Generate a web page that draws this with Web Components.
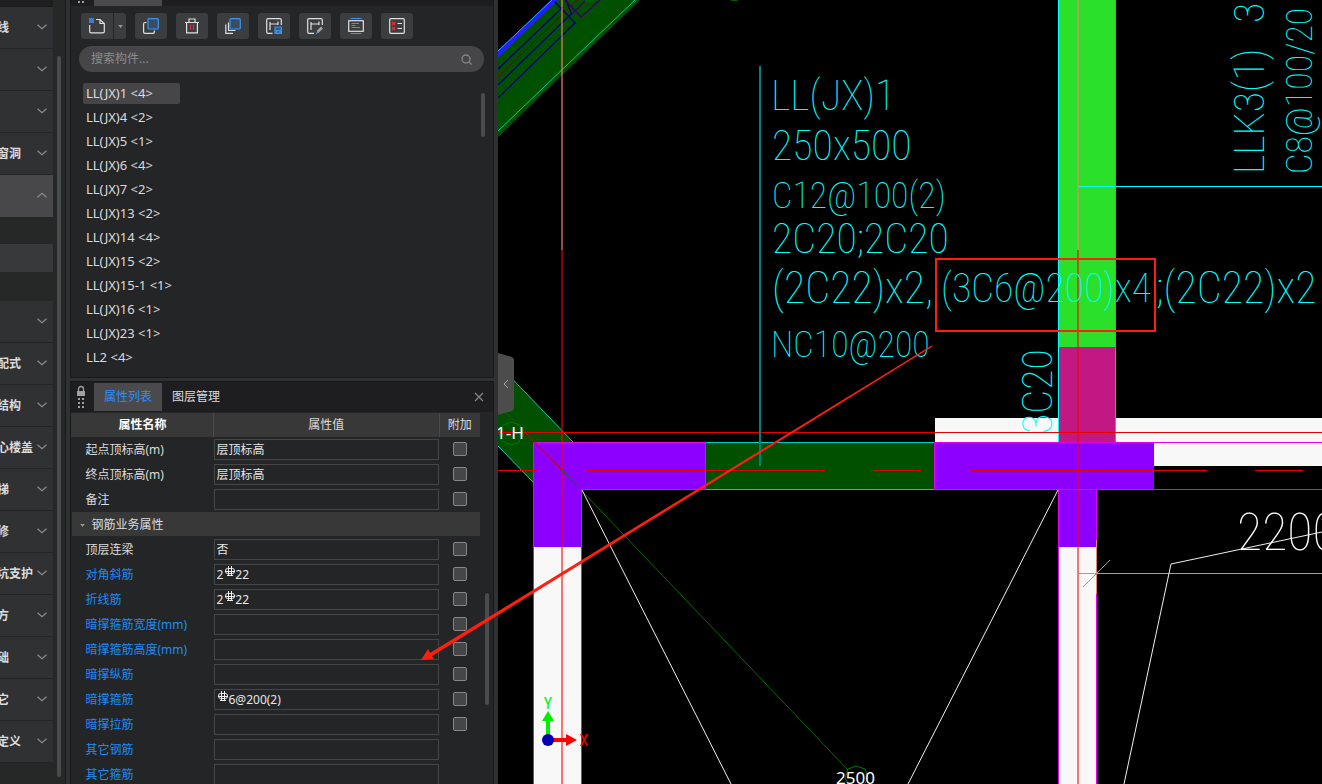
<!DOCTYPE html>
<html lang="zh-CN">
<head>
<meta charset="utf-8">
<title>属性列表</title>
<style>
    html, body {
        margin: 0;
        height: 100%;
        overflow: hidden;
        background: #000;
    }
    body {
        font: 12px/16px "Noto Sans", "Noto Sans CJK SC", sans-serif;
        color: #dcdcdc;
    }
</style>
</head>
<body>
<app-shell></app-shell>

<script>
// Base class: clones the template into an open shadow root
class BaseElement extends HTMLElement {
    constructor() {
        super();
        const template = document.createElement('template');
        template.innerHTML = this.constructor.markup;
        this.attachShadow({ mode: 'open' });
        this.shadowRoot.appendChild(template.content.cloneNode(true));
    }
}

// Scroll thumb, sized with --top and --size
class ScrollThumb extends BaseElement {
    static get markup() {
        return `
        <style>
            :host { display: block; width: 4px; flex: none; }
            div {
                margin-top: var(--top, 0);
                height: var(--size, 40px);
                border-radius: 2px;
                background: #4a4b4d;
            }
        </style>
        <div></div>`;
    }
}
customElements.define('scroll-thumb', ScrollThumb);

// One group of the navigation
class NavItem extends BaseElement {
    static get markup() {
        return `
        <style>
            :host { display: block; }
            button {
                display: flex;
                align-items: center;
                width: 100%;
                height: 42px;
                padding: 0 6px 0 0;
                border: 0;
                border-bottom: 1px solid #232425;
                background: #303132;
                color: #dcdcdc;
                font: inherit;
                font-weight: 600;
                text-align: left;
                white-space: nowrap;
            }
            span { flex: 1; margin-left: -3px; }
            svg { flex: none; width: 10px; height: 6px; padding-bottom: 2px; }
            :host([open]) button { background: #48484a; border-bottom-color: #48484a; }
            :host([open]) path { transform: rotate(180deg); transform-origin: 5px 3px; }
        </style>
        <button type="button">
            <span><slot></slot></span>
            <svg viewBox="0 0 10 6" fill="none" stroke="#8c8c8c" stroke-width="1.2"><path d="M0.5 0.7L5 4.7L9.5 0.7"/></svg>
        </button>`;
    }

    connectedCallback() {
        const open = this.hasAttribute('open');
        const button = this.shadowRoot.querySelector('button');
        button.setAttribute('aria-expanded', open);
        if (!this.textContent) {
            button.setAttribute('aria-label', 'group');
        }
    }
}
customElements.define('nav-item', NavItem);

class SideNav extends BaseElement {
    static get markup() {
        return `
        <style>
            :host {
                display: flex;
                gap: 4px;
                flex: none;
                width: 65px;
                background: #262827;
                border-right: 1px solid #19191a;
            }
            nav { width: 53px; overflow: hidden; }
            header { height: 6px; background: #1e1e20; border-bottom: 1px solid #19191a; }
            .sub { padding: 27px 0 29px; background: #262827; }
            .sub div { height: 28px; background: #38393a; }
            scroll-thumb { --top: 56px; --size: 721px; }
        </style>
        <nav>
            <header></header>
            <nav-item>线</nav-item>
            <nav-item></nav-item>
            <nav-item></nav-item>
            <nav-item>窗洞</nav-item>
            <nav-item open></nav-item>
            <div class="sub"><div></div></div>
            <nav-item></nav-item>
            <nav-item>配式</nav-item>
            <nav-item>结构</nav-item>
            <nav-item>心楼盖</nav-item>
            <nav-item>梯</nav-item>
            <nav-item>修</nav-item>
            <nav-item>坑支护</nav-item>
            <nav-item>方</nav-item>
            <nav-item>础</nav-item>
            <nav-item>它</nav-item>
            <nav-item>定义</nav-item>
        </nav>
        <scroll-thumb></scroll-thumb>`;
    }
}
customElements.define('side-nav', SideNav);

class ToolButton extends BaseElement {
    static get markup() {
        return `
        <style>
            :host { display: block; }
            button {
                display: grid;
                place-items: center;
                width: var(--width, 32px);
                height: 26px;
                padding: 0;
                border: 0;
                border-radius: var(--radius, 3px);
                background: #3c3d3f;
            }
        </style>
        <button type="button"><slot></slot></button>`;
    }

    connectedCallback() {
        this.shadowRoot.querySelector('button').setAttribute('aria-label', this.getAttribute('label'));
    }
}
customElements.define('tool-button', ToolButton);

class ToolBar extends BaseElement {
    static get markup() {
        return `
        <style>
            :host { display: flex; gap: 9px; padding: 7px 10px; }
            .split { display: flex; gap: 1px; }
            .split tool-button:first-child { --radius: 3px 0 0 3px; }
            .split tool-button:last-child { --width: 12px; --radius: 0 3px 3px 0; }
            svg { display: block; width: 16px; height: 16px; fill: none; stroke: #e0e0e0; stroke-width: 1.2; }
            .arrow { width: 5px; height: 3px; fill: #9a9a9a; stroke: none; }
            .blue { stroke: #3a96f0; }
            .red { stroke: #e02d33; }
        </style>
        <div class="split">
            <tool-button label="新建"><svg viewBox="0 0 16 16">
                <path d="M7 1.5H11L15.3 5.5V13.5Q15.3 14.8 14 14.8H2Q0.7 14.8 0.7 13.5V7M11 1.5V5.5H15"/>
                <path d="M0 0H5V5H0Z" fill="#2d6cb0" stroke="none"/>
                <path class="blue" stroke-dasharray="1 1" d="M0 0.5H5M1 1.5H5M0 2.5H5M1 3.5H5M0 4.5H5"/>
            </svg></tool-button>
            <tool-button label="新建类型"><svg class="arrow" viewBox="0 0 6 4"><path d="M0 0H6L3 4Z"/></svg></tool-button>
        </div>
        <tool-button label="复制"><svg viewBox="0 0 16 16">
            <path d="M3.5 4.5H2Q0.6 4.5 0.6 6V14Q0.6 15.4 2 15.4H10Q11.4 15.4 11.4 14V12.5"/>
            <rect class="blue" x="5" y="0.7" width="10.3" height="10.3" rx="1" fill="#3b4c61"/>
        </svg></tool-button>
        <tool-button label="删除"><svg viewBox="0 0 16 16">
            <path d="M1 4.5H15M5 4.5V1H11V4.5M2.6 4.5V14.9H13.4V4.5"/>
            <path class="red" d="M6.5 6.5V12M9.5 6.5V12"/>
        </svg></tool-button>
        <tool-button label="层间复制"><svg viewBox="0 0 16 16">
            <path d="M3.5 4.5V12.5H10.5M0.8 6.5V15.3H8"/>
            <rect class="blue" x="5" y="0.7" width="10.3" height="10.3" rx="1" fill="#3b4c61"/>
        </svg></tool-button>
        <tool-button label="存盘"><svg viewBox="0 0 16 16">
            <path d="M6.5 15.3H2Q0.7 15.3 0.7 14V2Q0.7 0.7 2 0.7H14Q15.3 0.7 15.3 2V7M4 4V12M4 6H12M12 3.5V7"/>
            <path class="blue" d="M9 9H15.4V15.4H9ZM10.5 15V12.5H14V15" fill="#2d5d8e"/>
        </svg></tool-button>
        <tool-button label="提取"><svg viewBox="0 0 16 16">
            <path d="M7 15.3H2Q0.7 15.3 0.7 14V2Q0.7 0.7 2 0.7H14Q15.3 0.7 15.3 2V7M4 4V12M4 6H12M12 3.5V7"/>
            <path d="M10.5 14L15 9.5" stroke="#a4a4a4" stroke-width="2.6"/>
            <path class="blue" d="M9 15.8L11 13.6"/>
        </svg></tool-button>
        <tool-button label="图元"><svg viewBox="0 0 16 16">
            <rect x="0.7" y="2.7" width="14.6" height="10.6"/>
            <path class="blue" d="M2.5 0.5H13.5M2.5 15.5H13.5M3.5 5.5H11M3.5 7.5H7.5M3.5 9.5H12"/>
        </svg></tool-button>
        <tool-button label="列表"><svg viewBox="0 0 16 16">
            <rect x="0.7" y="0.7" width="14.6" height="14.6" rx="1"/>
            <path d="M8.5 5.5H13M8.5 10.5H13"/>
            <path class="red" d="M3 4L6 7M6 4L3 7M3 9L6 12M6 9L3 12" stroke-width="1.6"/>
        </svg></tool-button>`;
    }
}
customElements.define('tool-bar', ToolBar);

class SearchBox extends BaseElement {
    static get markup() {
        return `
        <style>
            :host { display: block; padding: 0 9px 0 8px; }
            label {
                display: flex;
                align-items: center;
                height: 26px;
                padding: 0 12px;
                border-radius: 13px;
                background: #464648;
            }
            input {
                flex: 1;
                min-width: 0;
                padding: 0;
                border: 0;
                outline: 0;
                background: none;
                color: #dcdcdc;
                font: inherit;
            }
            input::placeholder { color: #8c8c8e; }
            svg { width: 11px; height: 11px; fill: none; stroke: #838385; stroke-width: 1.4; }
        </style>
        <label>
            <input type="text" placeholder="搜索构件..." aria-label="搜索构件">
            <svg viewBox="0 0 11 11"><circle cx="5" cy="5" r="4"/><path d="M8 8L10.5 10.5"/></svg>
        </label>`;
    }
}
customElements.define('search-box', SearchBox);

const COMPONENTS = [
    'LL(JX)1 <4>', 'LL(JX)4 <2>', 'LL(JX)5 <1>', 'LL(JX)6 <4>', 'LL(JX)7 <2>', 'LL(JX)13 <2>',
    'LL(JX)14 <4>', 'LL(JX)15 <2>', 'LL(JX)15-1 <1>', 'LL(JX)16 <1>', 'LL(JX)23 <1>', 'LL2 <4>',
];

class ComponentList extends BaseElement {
    static get markup() {
        return `
        <style>
            :host { display: flex; padding: 9px 8px 0 12px; }
            ul { flex: 1; margin: 0; padding: 0; list-style: none; font-size: 13px; line-height: 20px; }
            li { box-sizing: border-box; width: 97px; height: 24px; padding: 2px 0; }
            span { display: block; height: 21px; padding-left: 3px; border-radius: 2px; white-space: nowrap; }
            .selected span { background: #464648; }
            scroll-thumb { --top: 12px; --size: 44px; }
        </style>
        <ul></ul>
        <scroll-thumb></scroll-thumb>`;
    }

    connectedCallback() {
        const list = this.shadowRoot.querySelector('ul');
        COMPONENTS.forEach((name, i) => {
            const item = document.createElement('li');
            const text = document.createElement('span');
            text.textContent = name;
            item.appendChild(text);
            item.classList.toggle('selected', i === 0);
            list.appendChild(item);
        });
    }
}
customElements.define('component-list', ComponentList);

// The full-width space in a value leaves room for the rebar sign
const PROPERTIES = [
    { name: '起点顶标高(m)', value: '层顶标高', check: true },
    { name: '终点顶标高(m)', value: '层顶标高', check: true },
    { name: '备注', value: '', check: true },
    { group: '钢筋业务属性' },
    { name: '顶层连梁', value: '否', check: true },
    { name: '对角斜筋', value: '2\u300022', rebar: 'second', check: true, key: true },
    { name: '折线筋', value: '2\u300022', rebar: 'second', check: true, key: true },
    { name: '暗撑箍筋宽度(mm)', value: '', check: true, key: true },
    { name: '暗撑箍筋高度(mm)', value: '', check: true, key: true },
    { name: '暗撑纵筋', value: '', check: true, key: true },
    { name: '暗撑箍筋', value: '\u30006@200(2)', rebar: 'first', check: true, key: true },
    { name: '暗撑拉筋', value: '', check: true, key: true },
    { name: '其它钢筋', value: '', key: true },
    { name: '其它箍筋', value: '', key: true },
];

class PropertyTable extends BaseElement {
    static get markup() {
        return `
        <style>
            :host { display: flex; flex: 1; min-height: 0; overflow: hidden; gap: 5px; }
            .grid { flex: 1; }
            table { width: 100%; table-layout: fixed; border-collapse: collapse; }
            .name { width: 142px; }
            .extra { width: 41px; }
            thead th {
                height: 24px;
                padding: 0;
                border-left: 1px solid #4a4a4a;
                background: #383838;
                font-weight: 400;
            }
            thead th:first-child { font-weight: 700; color: #fff; border-left-color: #383838; }
            td { height: 25px; padding: 0; }
            td:first-child { padding-left: 14px; white-space: nowrap; }
            .key label { color: #1e8cf5; }
            .group td { background: linear-gradient(#383838, #383838) 0 0 / 100% 24px no-repeat; }
            .group td:first-child { padding-left: 8px; }
            .group svg { width: 5px; height: 3px; margin-right: 7px; vertical-align: middle; }
            .value { position: relative; }
            input[type=text] {
                display: block;
                box-sizing: border-box;
                width: 100%;
                height: 21px;
                padding: 0 2px 2px;
                border: 1px solid #464646;
                border-radius: 0;
                outline: 0;
                background: #242527;
                color: #e6e6e6;
                font: inherit;
            }
            .value svg { position: absolute; top: 4px; width: 12px; height: 12px; }
            .second { left: 10px; }
            .first { left: 3px; }
            input[type=checkbox] {
                appearance: none;
                display: block;
                box-sizing: border-box;
                width: 14px;
                height: 14px;
                margin: 0 auto 1px;
                border: 1px solid #868688;
                border-radius: 2px;
                background: #464648;
            }
            scroll-thumb { --top: 180px; --size: 112px; }
        </style>
        <div class="grid">
            <table>
                <colgroup><col class="name"><col><col class="extra"></colgroup>
                <thead><tr><th>属性名称</th><th>属性值</th><th>附加</th></tr></thead>
                <tbody></tbody>
            </table>
        </div>
        <scroll-thumb></scroll-thumb>`;
    }

    connectedCallback() {
        this.shadowRoot.querySelector('tbody').innerHTML = PROPERTIES.map(this._row, this).join('');
    }

    _row(prop, i) {
        if (prop.group) {
            return `<tr class="group"><td colspan="3"><svg viewBox="0 0 6 4"><path d="M0 0H6L3 4Z" fill="#9a9a9a"/></svg>${prop.group}</td></tr>`;
        }
        return `
        <tr class="${prop.key ? 'key' : ''}">
            <td><label for="prop${i}">${prop.name}</label></td>
            <td class="value">
                <input type="text" id="prop${i}" value="${prop.value}">
                ${prop.rebar ? this._rebar(prop.rebar) : ''}
            </td>
            <td>${prop.check ? `<input type="checkbox" aria-label="${prop.name} 附加">` : ''}</td>
        </tr>`;
    }

    _rebar(place) {
        return `<svg class="${place}" viewBox="0 0 12 12" fill="none" stroke="#f0f0f0"><path d="M3.5 2.5H8.5Q10.5 2.5 10.5 5T8.5 7.5H3.5Q1.5 7.5 1.5 5T3.5 2.5M4.5 0V9.5M7.5 0V9.5M1 5.5H11M3 9.5H9"/></svg>`;
    }
}
customElements.define('property-table', PropertyTable);

class TabStrip extends BaseElement {
    static get markup() {
        return `
        <style>
            :host {
                display: flex;
                height: 28px;
                padding: 1px 8px 1px 5px;
                background: #1e1e20;
            }
            .grip { width: 18px; height: 28px; flex: none; }
            button {
                width: 68px;
                padding: 0;
                border: 0;
                background: none;
                color: #dcdcdc;
                font: inherit;
            }
            .active { background: #4a4a4c; color: #2d8cff; }
            .close { width: 12px; margin-left: auto; }
            .close svg { display: block; width: 10px; height: 10px; margin: auto; }
        </style>
        <svg class="grip" viewBox="0 0 18 28" fill="#a0a0a0">
            <path d="M2.5 8V6a2.5 2.5 0 0 1 5 0V8" fill="none" stroke="#a0a0a0" stroke-width="1.3"/>
            <path d="M1 8H9V13H1ZM2 15h2v2H2zM6 15h2v2H6zM2 19h2v2H2zM6 19h2v2H6zM2 23h2v2H2zM6 23h2v2H6z"/>
        </svg>
        <button type="button" class="active">属性列表</button>
        <button type="button">图层管理</button>
        <button type="button" class="close" aria-label="关闭">
            <svg viewBox="0 0 10 10" stroke="#858585" stroke-width="1.2"><path d="M1 1L9 9M9 1L1 9"/></svg>
        </button>`;
    }
}
customElements.define('tab-strip', TabStrip);

class SidePanels extends BaseElement {
    static get markup() {
        return `
        <style>
            :host {
                box-sizing: border-box;
                display: flex;
                flex-direction: column;
                gap: 3px;
                flex: none;
                width: 432px;
                padding: 0 4px;
                background: #303132;
            }
            section {
                display: flex;
                flex-direction: column;
                border: 1px solid #19191a;
                background: #242527;
                overflow: hidden;
            }
            .list { box-sizing: border-box; flex: none; height: 378px; border-top: 0; }
            .props { flex: 1; min-height: 0; border-bottom: 0; }
            .strip { display: flex; flex: none; height: 6px; padding-left: 5px; background: #1e1e20; }
            .strip svg { width: 18px; height: 6px; }
            .strip div { width: 68px; background: #4a4a4c; }
            property-table { padding: 1px 4px 0 0; }
        </style>
        <section class="list">
            <div class="strip">
                <svg viewBox="0 0 18 6" fill="#a0a0a0"><path d="M2 1h2v2H2zM6 1h2v2H6z"/></svg>
                <div></div>
            </div>
            <tool-bar></tool-bar>
            <search-box></search-box>
            <component-list></component-list>
        </section>
        <section class="props">
            <tab-strip></tab-strip>
            <property-table></property-table>
        </section>`;
    }
}
customElements.define('side-panels', SidePanels);

// The drawing: beams, walls, axes and CAD notes
class CadView extends BaseElement {
    static get markup() {
        return `
        <style>
            :host { display: block; flex: 1; min-width: 0; background: #000; overflow: hidden; }
            svg { display: block; width: 100%; height: 100%; }
            .crisp { shape-rendering: crispEdges; }
            .cad { font: 100 42px "Roboto Condensed", Roboto, sans-serif; fill: #0ff; }
            .small { font-size: 36px; }
            .medium { font-size: 40px; }
            .large { font-size: 44px; }
            .dimension { font-size: 52px; fill: #fff; }
            .label { font: 17px "Noto Sans", sans-serif; fill: #fff; }
            .axis { font: 16px "Roboto Condensed", Roboto, sans-serif; text-anchor: middle; }
        </style>
        <svg viewBox="498 0 824 784" preserveAspectRatio="xMinYMin slice" fill="none">
            <path fill="#005000" d="M498 51L551 0H640L498 137Z"/>
            <path fill="#1e1eff" d="M498 51L551 0H558L498 58Z"/>
            <path stroke="#28aaff" d="M498 51L552 0"/>
            <path stroke="#00c8a0" d="M498 131L635 0"/>
            <path stroke="#000078" stroke-width="1.5" d="M498 69L563 7M498 85L571 14M498 98L575 23L555 2M566 0L572 15"/>
            <path stroke="#501400" d="M498 77L577 0"/>
            <path stroke="#3c0064" stroke-width="1.5" d="M565 0L581 17L600 0M573 13L586 0"/>
            <path fill="#005a00" d="M731 0h7v1h-7zM585 0h8v2h-8z"/>

            <path fill="#005000" d="M498 364L573 442H534V484L498 446Z"/>
            <path stroke="#00c8be" d="M498 364L573 442M498 446L534 483"/>
            <g class="crisp">
                <path fill="#f8f8f8" d="M935 418H1322V466H935ZM534 547H582V784H534ZM1059 547H1097V784H1059Z"/>
                <path fill="#2be02b" d="M1059 0H1116V347H1059Z"/>
                <path fill="#c21884" d="M1059 347H1116V442H1059Z"/>
                <path stroke="#00ffff" d="M1058.5 0V442M1078 186.5H1322"/>
                <path stroke="#28b4b4" d="M1115.5 0V442"/>
                <path fill="#005000" d="M705 442H935V490H705Z"/>
                <path stroke="#00c8c8" d="M573 442.5H1059M705 489.5H935"/>
                <path fill="#8c00ff" d="M534 442H705V490H582V547H534ZM935 442H1154V490H1097V547H1059V490H935Z"/>
                <path stroke="#e600f0" d="M533.5 784V442.5H705.5V489.5H581.5V784M934.5 490V442.5H1322M934 489.5H1322M1058.5 490V784M1096.5 490V784"/>
                <path stroke="#e60000" d="M498 432.5H1322"/>
                <path stroke="#e60000" d="M498 470.5H538M586 470.5H825M873 470.5H921M969 470.5H1207M1255 470.5H1303"/>
                <path stroke="#ff0000" stroke-opacity=".55" stroke-width="2" d="M562 250V784M1078 250V784"/>
                <path stroke="#f08468" stroke-opacity=".6" stroke-width="2" d="M562 0V250M1078 0V250"/>
                <path stroke="#008080" stroke-width="2" d="M760 66V466"/>
                <path stroke="#e08868" d="M1077 573.5H1322M1096.5 540V594"/>
            </g>
            <path stroke="#e08868" d="M1083 587L1110 560"/>
            <path stroke="#c80000" d="M506 413L562 470"/>
            <path stroke="#006e00" d="M562 470L848 770"/>
            <path stroke="#f0f0f0" d="M582 490L731 784M1058 490L908 784M1322 532L1171 564L1124 784"/>
            <path stroke="#007800" d="M511 422L520 425L523 434L519 442L511 445L502 441L499 433L503 425ZM845 778L848 769L856 766L865 769L868 778L863 787H850Z"/>

            <g class="cad">
                <text x="771" y="110">LL(JX)1</text>
                <text x="772" y="160">250x500</text>
                <text class="small" x="772" y="208">C12@100(2)</text>
                <text x="772" y="253">2C20;2C20</text>
                <text class="large" x="772" y="303">(2C22)x2,</text>
                <text class="medium" x="941" y="302">(3C6@200)x4</text>
                <text class="large" x="1156" y="303">;(2C22)x2</text>
                <text class="small" x="771" y="357">NC10@200</text>
                <text transform="translate(1052 434) rotate(-90)">3C20</text>
                <text transform="translate(1264 174) rotate(-90)">LLK3(1)</text>
                <text transform="translate(1264 23) rotate(-90)">3</text>
                <text class="small" transform="translate(1312 174) rotate(-90)">C8@100/20</text>
                <text class="dimension" x="1237" y="550">2200</text>
            </g>
            <text class="label" x="496" y="439">1-H</text>
            <text class="label" x="836" y="784">2500</text>

            <path fill="#00f000" d="M546 738V721H542L548 711L554 721H550V738Z"/>
            <path fill="#ff0000" d="M552 738H566V734L577 740L566 746V742H552Z"/>
            <circle cx="548" cy="740" r="6" fill="#0000b4"/>
            <text class="axis" x="548" y="709" fill="#00f000">Y</text>
            <text class="axis" x="584" y="746" fill="#ff0000">X</text>
        </svg>`;
    }
}
customElements.define('cad-view', CadView);

class AppShell extends BaseElement {
    static get markup() {
        return `
        <style>
            :host { position: relative; display: flex; height: 100vh; overflow: hidden; }
            .handle, .notes { position: absolute; }
            .handle {
                left: 498px;
                top: 353px;
                width: 16px;
                height: 62px;
                padding: 0;
                border: 0;
                background: #4c4c4c;
                clip-path: polygon(0 0, 14px 4px, 16px 6px, 16px 56px, 14px 58px, 0 62px);
            }
            .handle svg { display: block; margin: auto; }
            .notes { inset: 0; width: 100%; height: 100%; pointer-events: none; }
        </style>
        <side-nav></side-nav>
        <side-panels></side-panels>
        <cad-view></cad-view>
        <button class="handle" type="button" aria-label="收起">
            <svg width="6" height="10" viewBox="0 0 6 10" fill="none" stroke="#a0a0a0"><path d="M5 1L1 5L5 9"/></svg>
        </button>
        <svg class="notes" viewBox="0 0 1322 784" preserveAspectRatio="xMinYMin slice">
            <rect x="936" y="259" width="219" height="72" fill="none" stroke="#ff1e0f" stroke-width="2"/>
            <path d="M421 660L428 649L430 653L931.5 345.5L932.5 346.5L432 656L434 659Z" fill="#ff1e0f"/>
        </svg>`;
    }
}
customElements.define('app-shell', AppShell);
</script>
</body>
</html>
